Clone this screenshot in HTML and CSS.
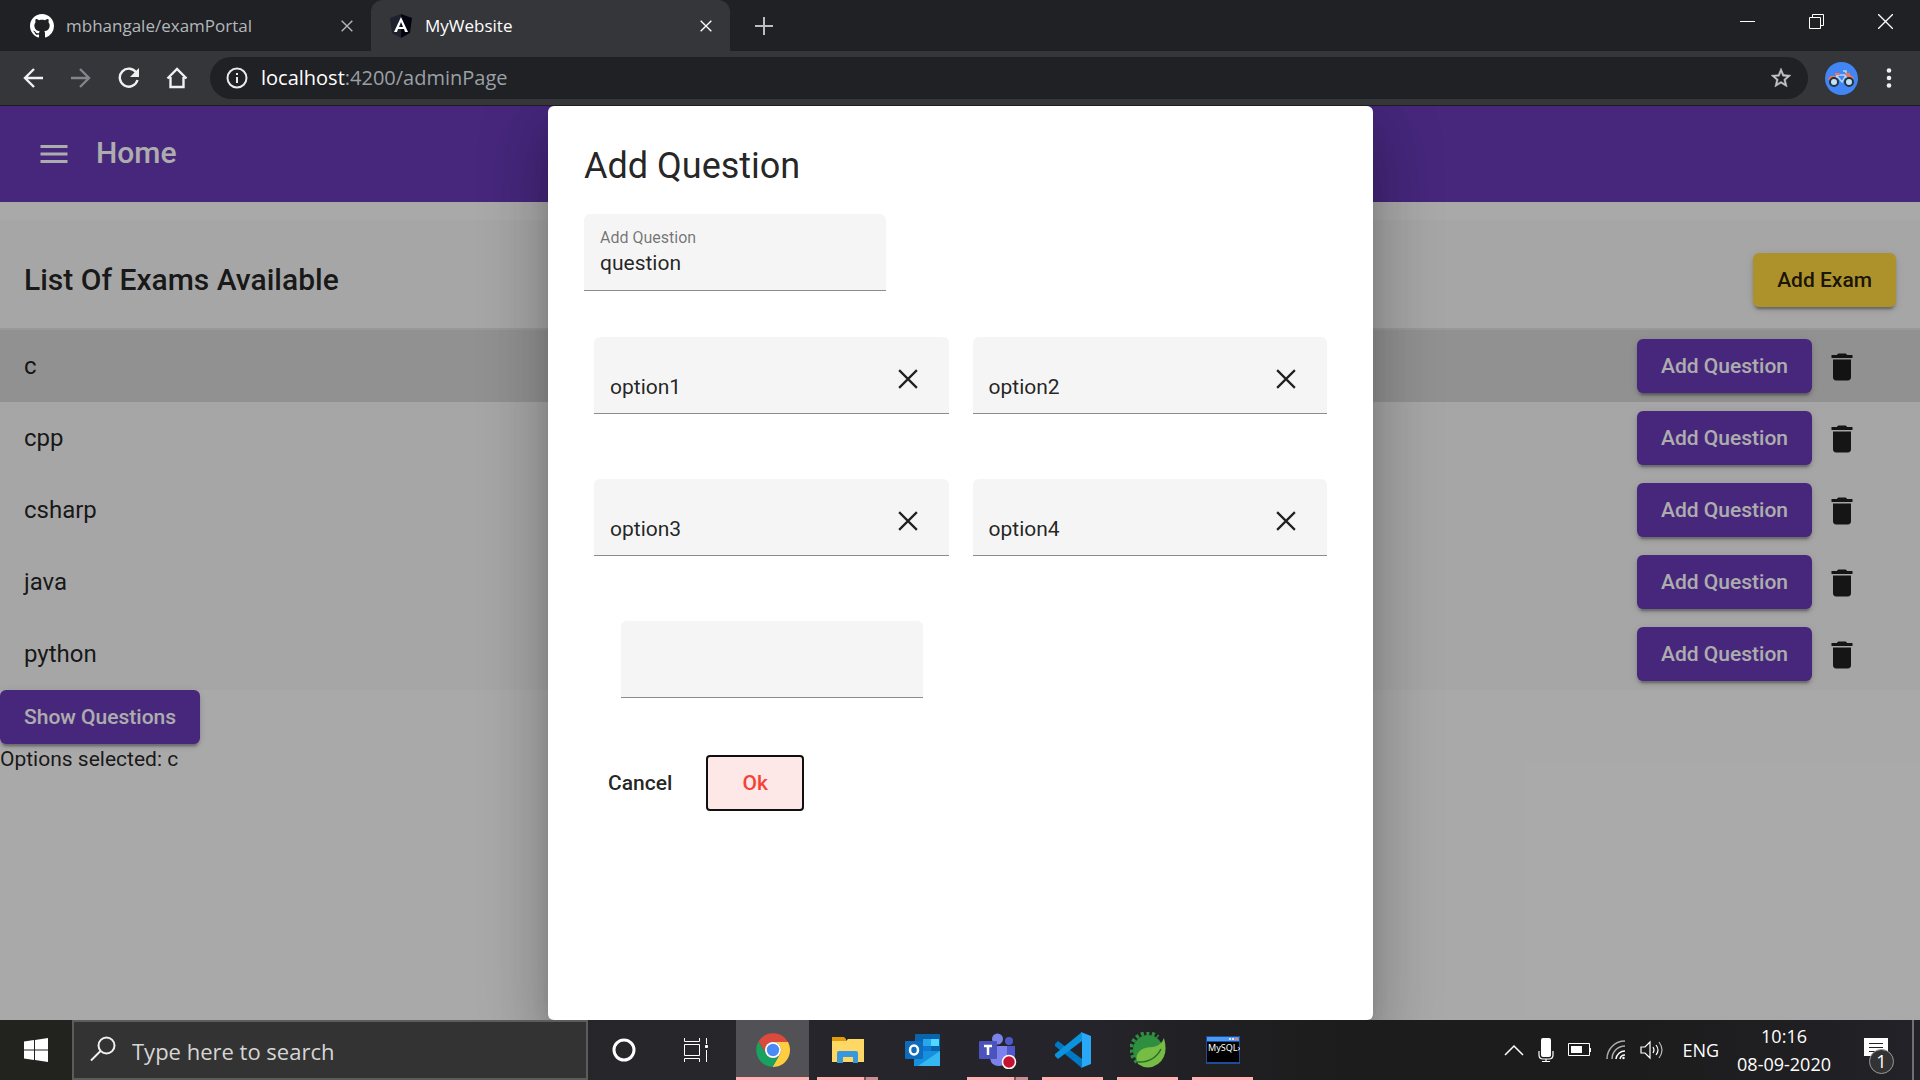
FILE: index.html
```html
<!DOCTYPE html>
<html lang="en">
<head>
<meta charset="utf-8">
<title>MyWebsite</title>
<link rel="stylesheet" href="styles.css">
</head>
<body>
<svg class="defs" aria-hidden="true">
  <symbol id="trash" viewBox="0 0 24 24"><path d="M6 19c0 1.100.9 2 2 2h8c1.100 0 2-.9 2-2V7H6v12zM19 4h-3.500l-1-1h-5l-1 1H5v2h14V4z"/></symbol>
  <symbol id="cross" viewBox="0 0 18 18"><path d="M1 1 17 17M17 1 1 17" fill="none" stroke="currentColor" stroke-width="2"/></symbol>
</svg>

<header class="browser">
  <div class="tabs">
    <div class="tab">
      <svg class="favicon" viewBox="0 0 16 16"><path fill="#fff" d="M8 0C3.580 0 0 3.580 0 8c0 3.540 2.290 6.530 5.470 7.590.4.070.550-.170.550-.380 0-.190-.010-.820-.010-1.490-2.010.370-2.530-.490-2.690-.940-.090-.230-.480-.940-.820-1.130-.280-.150-.680-.520-.010-.530.630-.010 1.080.580 1.230.820.720 1.210 1.870.870 2.330.660.070-.520.280-.870.510-1.070-1.780-.2-3.640-.890-3.640-3.950 0-.870.310-1.590.820-2.150-.080-.2-.360-1.020.080-2.120 0 0 .670-.210 2.200.820.640-.180 1.320-.270 2-.270s1.360.090 2 .270c1.530-1.040 2.200-.820 2.200-.820.440 1.100.160 1.920.080 2.120.510.560.820 1.270.820 2.150 0 3.070-1.870 3.750-3.650 3.950.290.250.540.730.540 1.480 0 1.070-.010 1.930-.010 2.200 0 .210.150.460.550.380A8.010 8.010 0 0 0 16 8c0-4.420-3.580-8-8-8z"/></svg>
      <span class="tab-title">mbhangale/examPortal</span>
      <button class="tab-close" aria-label="Close tab"><svg width="12" height="12"><use href="#cross"/></svg></button>
    </div>
    <div class="tab active">
      <svg class="favicon" viewBox="0 0 24 24"><path fill="#1d222e" d="M12 0 1 4l2 15 9 5z"/><path fill="#02050f" d="m12 0 11 4-2 15-9 5z"/><path fill="#fff" d="M12 3 5 18h3l1-3h6l1 3h3zm0 5 2 5h-4z"/></svg>
      <span class="tab-title">MyWebsite</span>
      <button class="tab-close" aria-label="Close tab"><svg width="12" height="12"><use href="#cross"/></svg></button>
    </div>
    <button class="new-tab" aria-label="New tab"><svg width="18" height="18" viewBox="0 0 18 18"><path d="M9 0v18M0 9h18" stroke="#bcbdbf" stroke-width="2"/></svg></button>
    <div class="window-controls">
      <button aria-label="Minimize"><svg width="15" height="15"><path d="M0 7.500h15" stroke="#fff"/></svg></button>
      <button aria-label="Restore"><svg width="15" height="15" fill="none" stroke="#fff"><path d="M.5 3.500h11v11H.5zM3.500 3.500v-3h11v11h-3"/></svg></button>
      <button aria-label="Close"><svg width="15" height="15"><path d="m0 0 15 15M15 0 0 15" stroke="#fff" stroke-width="1.300"/></svg></button>
    </div>
  </div>
  <nav class="toolbar">
    <button aria-label="Back"><svg width="20" height="20" viewBox="0 0 20 20"><path d="M20 10H2M11 1l-9 9 9 9"/></svg></button>
    <button class="dim" aria-label="Forward"><svg width="20" height="20" viewBox="0 0 20 20"><path d="M0 10h18M9 1l9 9-9 9"/></svg></button>
    <button aria-label="Reload"><svg width="22" height="22" viewBox="0 0 22 22"><path d="M18.500 6A9 9 0 1 0 19.500 13"/><path class="solid" d="M21 1v9h-9z"/></svg></button>
    <button aria-label="Home"><svg width="22" height="22" viewBox="0 0 22 22"><path d="M1.500 11.500 11 2l9.500 9.500M4.500 10v10h13V10"/></svg></button>
    <div class="address">
      <svg width="22" height="22" viewBox="0 0 22 22"><circle cx="11" cy="11" r="9.500" fill="none" stroke="#e8eaed" stroke-width="2"/><path d="M11 10v6M11 6v2" stroke="#e8eaed" stroke-width="2"/></svg>
      <div class="url" role="textbox" aria-label="Address">localhost<span>:4200/adminPage</span></div>
      <button class="star" aria-label="Bookmark"><svg width="24" height="24" viewBox="0 0 24 24"><path d="m22 9.240-7.190-.620L12 2 9.190 8.630 2 9.240l5.460 4.730L5.820 21 12 17.270 18.180 21l-1.630-7.030L22 9.240zM12 15.400l-3.760 2.270 1-4.280-3.320-2.880 4.380-.380L12 6.100l1.710 4.040 4.380.380-3.320 2.880 1 4.280L12 15.400z"/></svg></button>
    </div>
    <button class="profile" aria-label="Profile"><svg width="33" height="33" viewBox="0 0 33 33" fill="none"><circle cx="16.500" cy="16.500" r="16.500" fill="#4285f4"/><g class="frame"><path d="m9 20 3-7h8l4 7M12 14l5 6 4-7M18 9h3v4"/></g><g class="trim"><path d="M10 12h5M4 18q1-4 6-3M22 14q4-1 6 3M20 12h5"/></g><g fill="#c1e3fa" stroke="#26323e" stroke-width="2"><circle cx="9" cy="20" r="4"/><circle cx="24" cy="20" r="4"/></g></svg></button>
    <button class="kebab" aria-label="Menu"><svg width="6" height="20" viewBox="0 0 6 20" fill="#f1f1f1"><circle cx="3" cy="2.500" r="2.300"/><circle cx="3" cy="10" r="2.300"/><circle cx="3" cy="17.500" r="2.300"/></svg></button>
  </nav>
</header>

<main class="viewport">
  <div class="app">
    <header class="app-bar">
      <button aria-label="Open menu"><svg width="36" height="36" viewBox="0 0 24 24"><path fill="#fff" d="M3 18h18v-2H3v2zm0-5h18v-2H3v2zm0-7v2h18V6H3z"/></svg></button>
      <h1>Home</h1>
    </header>
    <section class="exams">
      <div class="exams-head">
        <h2>List Of Exams Available</h2>
        <button class="btn accent">Add Exam</button>
      </div>
      <ul>
        <li class="selected"><span>c</span><button class="btn primary">Add Question</button><button class="delete" aria-label="Delete c"><svg><use href="#trash"/></svg></button></li>
        <li><span>cpp</span><button class="btn primary">Add Question</button><button class="delete" aria-label="Delete cpp"><svg><use href="#trash"/></svg></button></li>
        <li><span>csharp</span><button class="btn primary">Add Question</button><button class="delete" aria-label="Delete csharp"><svg><use href="#trash"/></svg></button></li>
        <li><span>java</span><button class="btn primary">Add Question</button><button class="delete" aria-label="Delete java"><svg><use href="#trash"/></svg></button></li>
        <li><span>python</span><button class="btn primary">Add Question</button><button class="delete" aria-label="Delete python"><svg><use href="#trash"/></svg></button></li>
      </ul>
    </section>
    <button class="btn primary">Show Questions</button>
    <p class="summary">Options selected: c</p>
  </div>

  <div class="backdrop">
    <form class="dialog" role="dialog" aria-labelledby="dialog-title">
      <h2 id="dialog-title">Add Question</h2>
      <div class="field narrow">
        <div class="field-text">
          <label for="question">Add Question</label>
          <input id="question" type="text" value="question">
        </div>
      </div>
      <div class="options">
        <div class="field"><input type="text" value="option1" aria-label="Option 1"><button type="button" aria-label="Clear option 1"><svg width="20" height="20"><use href="#cross"/></svg></button></div>
        <div class="field"><input type="text" value="option2" aria-label="Option 2"><button type="button" aria-label="Clear option 2"><svg width="20" height="20"><use href="#cross"/></svg></button></div>
        <div class="field"><input type="text" value="option3" aria-label="Option 3"><button type="button" aria-label="Clear option 3"><svg width="20" height="20"><use href="#cross"/></svg></button></div>
        <div class="field"><input type="text" value="option4" aria-label="Option 4"><button type="button" aria-label="Clear option 4"><svg width="20" height="20"><use href="#cross"/></svg></button></div>
      </div>
      <div class="field narrow answer"><input type="text" aria-label="Answer"></div>
      <div class="actions">
        <button type="button" class="cancel">Cancel</button>
        <button type="button" class="ok">Ok</button>
      </div>
    </form>
  </div>
</main>

<footer class="taskbar">
  <button class="start" aria-label="Start"><svg width="24" height="24" viewBox="0 0 24 24" fill="#fff"><path d="M0 3.500 10 2v9.500H0zM11 2l13-2v11.500H11zM0 12.500h10V22L0 20.500zM11 12.500h13V24l-13-2z"/></svg></button>
  <label class="search">
    <svg width="26" height="26" viewBox="0 0 26 26" fill="none" stroke="#f0f0f0" stroke-width="2"><circle cx="16.500" cy="9.500" r="8"/><path d="M10.500 15 1 24.500"/></svg>
    <input type="text" placeholder="Type here to search" aria-label="Search">
  </label>
  <button class="shell" aria-label="Cortana"><svg width="24" height="24"><circle cx="12" cy="12" r="10" fill="none" stroke="#fff" stroke-width="3"/></svg></button>
  <button class="shell" aria-label="Task view"><svg width="26" height="24" viewBox="0 0 26 24" fill="none" stroke="#fff"><path d="M1.500 0v3.500h15V0M1.500 6.500h15v11h-15zM1.500 24v-3.500h15V24M23.500 0v6M23.500 12v12"/><path fill="#fff" d="M22.500 7.500h2v2h-2z"/></svg></button>
  <div class="apps">
    <button class="task current" aria-label="Chrome"><svg width="34" height="34" viewBox="0 0 34 34"><path fill="#db4a3c" d="M2.500 8.500A17 17 0 0 1 32 9H17a8 8 0 0 0-7.500 11z"/><path fill="#ffcd40" d="M32 9a17 17 0 0 1-15.500 25L24 21a8 8 0 0 0-7-12z"/><path fill="#18a15f" d="M2.500 8.500A17 17 0 0 0 16.500 34L24 21a8 8 0 0 1-14 0z"/><circle cx="17" cy="17" r="8" fill="#fff"/><circle cx="17" cy="17" r="6.200" fill="#4a8af4"/></svg></button>
    <button class="task open many" aria-label="File Explorer"><svg width="34" height="28" viewBox="0 0 34 28"><path fill="#e09c0b" d="M1 1h12l2 2h0v3H1z"/><path fill="#ffd765" d="M1 5h14l2-2h16v23H1z"/><path fill="#3898dd" d="M6 27V17q0-2 2-2h17q2 0 2 2v10h-5v-6H12v6z"/></svg></button>
    <button class="task" aria-label="Outlook"><svg width="36" height="34" viewBox="0 0 36 34"><rect x="10" y="1" width="25" height="20" rx="1" fill="#0a64ad"/><path fill="#28a8ea" d="M18 6h8v7h-8z"/><path fill="#50d9ff" d="M26 6h8v7h-8z"/><path fill="#0f78d4" d="M18 13h8v7h-8z"/><path fill="#1490df" d="m9 18 26 0v15H9z"/><path fill="#35b8f1" d="m35 18-22 15h22z"/><rect y="8" width="18" height="18" rx="1" fill="#0f6cbd"/><ellipse cx="9" cy="17" rx="4" ry="4.500" fill="none" stroke="#fff" stroke-width="2.500"/></svg></button>
    <button class="task open many" aria-label="Teams"><svg width="38" height="38" viewBox="0 0 38 38"><circle cx="30" cy="10" r="4" fill="#5059c9"/><circle cx="18.500" cy="8" r="5.500" fill="#7b83eb"/><path fill="#5059c9" d="M24 15h12v9q0 6-6 6h-6z"/><path fill="#7b83eb" d="M11 15h17v12q0 8-8 8t-9-8z"/><rect y="10" width="18" height="18" rx="1" fill="#4b53bc"/><path d="M5 15h8M9 15v9" stroke="#fff" stroke-width="2.500"/><circle cx="30" cy="31" r="6.500" fill="#c4122f" stroke="#fff" stroke-width="1.500"/></svg></button>
    <button class="task open" aria-label="Visual Studio Code"><svg width="36" height="36" viewBox="0 0 36 36"><path fill="#0079c4" d="m3 9-3 3v2l27 22v-9z"/><path fill="#0b93dd" d="M27 0 0 22v2l3 3 24-18z"/><path fill="#29a9f5" d="m26 0 10 4v28l-10 4q1-1 1-2V2z"/></svg></button>
    <button class="task open" aria-label="Spring Tools"><svg width="36" height="36" viewBox="0 0 36 36"><circle cx="18" cy="18" r="15" fill="#2f8f40"/><path fill="none" stroke="#2f8f40" stroke-width="4" stroke-dasharray="3 2.500" d="M7 30A16 16 0 0 1 28 5"/><path fill="#77bc43" d="M34 6q5 18-6 26-10 7-20 0-4-9 3-14 4-3 12-3 8-1 11-9z"/><path d="M7 30q17 1 24-13" fill="none" stroke="#246b32" stroke-width="1.500"/></svg></button>
    <button class="task open" aria-label="MySQL"><svg width="34" height="28" viewBox="0 0 34 28"><path fill="#204b9b" d="M0 0h34v28H0z"/><path fill="#4a9bf0" d="M1 1h32v4H1z"/><path fill="#e6876b" d="M29 2h3v2h-3z"/><path fill="#d4e6f8" d="M23 2h2v2h-2zM26 2h2v2h-2z"/><path fill="#000" d="M1 6h32v20H1z"/><text x="2" y="15" class="icon-text">MySQL›</text></svg></button>
  </div>
  <div class="tray">
    <div class="tray-icons">
      <button aria-label="Show hidden icons"><svg width="20" height="12"><path d="m1 11 9-9 9 9" fill="none" stroke="#fff" stroke-width="1.500"/></svg></button>
      <svg width="16" height="24" viewBox="0 0 16 24"><rect x="3" width="10" height="19" rx="2" fill="#fff"/><path d="M1 13v4q0 4 4 4h6q4 0 4-4v-4M8 21v3M4 23.500h8" fill="none" stroke="#fff" stroke-width="1.200"/></svg>
      <svg width="24" height="14" viewBox="0 0 24 14"><path d="M.5.500h21v12H.5zM22.500 5v4" fill="none" stroke="#fff"/><path fill="#fff" d="M3 3h11v7H3z"/></svg>
      <svg width="20" height="20" viewBox="0 0 20 20" fill="none" stroke="#aaa" stroke-width="1.500"><path d="M1 19A18 18 0 0 1 19 1M6 19A13 13 0 0 1 19 6"/><path stroke="#fff" d="M10 19a9 9 0 0 1 9-8M14 19a5 5 0 0 1 5-4"/><circle cx="17.500" cy="18" r="1.200" fill="#fff" stroke="none"/></svg>
      <svg width="24" height="20" viewBox="0 0 24 20" fill="none" stroke="#fff" stroke-width="1.200"><path d="M1 7v6h4l5 5V2L5 7zM13 7q2 3 0 6M16 5q4 5 0 10"/><path stroke="#bbb" d="M19 2q6 8 0 16"/></svg>
    </div>
    <span>ENG</span>
    <time class="clock" datetime="2020-09-08T10:16"><span>10:16</span><span>08-09-2020</span></time>
    <button class="notify" aria-label="Notifications"><svg width="24" height="24" viewBox="0 0 24 24"><path fill="#fff" d="M0 0h24v18H14l-3 5v-5H0z"/><path d="M5 5.500h14M5 9.500h14M5 13.500h8" stroke="#222"/></svg><span class="badge">1</span></button>
  </div>
  <button class="show-desktop" aria-label="Show desktop"></button>
</footer>
</body>
</html>
```
FILE: styles.css
```css
* { box-sizing: border-box; }
body { margin: 0; height: 100vh; display: flex; flex-direction: column; overflow: hidden; font-family: Roboto, sans-serif; color: rgba(0, 0, 0, .87); }
h1, h2, p, ul { margin: 0; padding: 0; list-style: none; }
button, input { font: inherit; color: inherit; background: none; border: 0; padding: 0; margin: 0; }
button { display: flex; align-items: center; justify-content: center; }
svg { display: block; flex: none; }
.defs { display: none; }

/* Browser window */
.browser { flex: none; background: #202124; color: #fff; font-family: "Open Sans", sans-serif; }
.tabs { display: flex; height: 51px; }
.tab { display: flex; align-items: center; gap: 12px; width: 359px; height: 51px; padding: 0 18px; color: #b4b8bc; }
.tab:first-child { width: 371px; padding: 0 18px 0 30px; }
.tab.active { background: #35363a; border-radius: 12px 12px 0 0; color: #fff; }
.favicon { width: 24px; height: 24px; }
.tab-title { flex: 1; font-size: 17px; line-height: 24px; }
.tab-close { width: 12px; }
.new-tab { width: 68px; }
.window-controls { display: flex; margin-left: auto; height: 43px; }
.window-controls button { width: 69px; }
.toolbar { display: flex; align-items: center; height: 55px; padding-left: 9px; background: #35363a; border-bottom: 1px solid #1d1d20; }
.toolbar button { width: 48px; height: 42px; }
.toolbar button svg path { fill: none; stroke: #f1f1f1; stroke-width: 2.4; }
.toolbar button svg .solid { fill: #f1f1f1; stroke: none; }
.toolbar .dim svg path { stroke: #84858a; }
.toolbar .star svg path { fill: #c4c5c7; stroke: #c4c5c7; stroke-width: .4; }
.toolbar .profile { width: 33px; margin-left: 17px; }
.toolbar .profile .frame path { stroke-width: 1.5; stroke: #b5d6f5; }
.toolbar .profile .trim path { stroke-width: 2; stroke: #f3754f; }
.toolbar .kebab { width: 62px; }
.address { flex: 1; display: flex; align-items: center; gap: 13px; height: 42px; margin-left: 9px; padding: 0 3px 0 16px; border-radius: 21px; background: #202124; }
.url { flex: 1; font-size: 20px; line-height: 28px; }
.url span { color: #9aa0a6; }

/* Admin page */
.viewport { flex: 1; min-height: 0; position: relative; background: #fafafa; font-size: 21px; }
.app-bar { display: flex; align-items: center; height: 96px; padding: 0 24px; background: #673ab7; color: #fff; }
.app-bar button { width: 60px; height: 60px; }
.app-bar h1 { margin-left: 12px; font-size: 30px; font-weight: 500; line-height: 36px; padding-bottom: 2px; }
.exams { margin-top: 18px; background: #f5f5f5; }
.exams-head { display: flex; align-items: center; justify-content: space-between; height: 110px; padding: 12px 24px 0; border-bottom: 2px solid #e0e0e0; }
.exams-head h2 { font-size: 30px; font-weight: 500; line-height: 36px; }
.exams li { display: flex; align-items: center; height: 72px; padding: 0 60px 0 24px; font-size: 24px; }
.exams li span { flex: 1; }
.selected { background: #d6d6d6; }
.delete { margin-left: 12px; padding-top: 2px; }
.delete svg { width: 36px; height: 36px; fill: currentColor; }
.btn { height: 54px; padding: 0 24px; border-radius: 6px; font-size: 21px; font-weight: 500; box-shadow: 0 5px 2px -3px rgba(0, 0, 0, .2), 0 3px 3px rgba(0, 0, 0, .14), 0 2px 8px rgba(0, 0, 0, .12); }
.primary { background: #673ab7; color: #fff; }
.accent { background: #ffd740; }
.summary { line-height: 30px; }

/* Add question dialog */
.backdrop { position: absolute; inset: 0; display: flex; justify-content: center; padding-left: 1px; background: rgba(0, 0, 0, .32); overflow: hidden; }
.dialog { width: 43%; max-width: 825px; padding: 36px; border-radius: 6px; background: #fff; box-shadow: 0 16px 22px -10px rgba(0, 0, 0, .2), 0 36px 57px 4px rgba(0, 0, 0, .14), 0 14px 69px 12px rgba(0, 0, 0, .12); }
.dialog h2 { margin-bottom: 24px; font-size: 36px; font-weight: 400; line-height: 48px; }
.field { display: flex; align-items: center; height: 77px; padding: 0 16px; background: #f5f5f5; border-bottom: 1px solid #8c8c8c; border-radius: 6px 6px 0 0; }
.field input { flex: 1; width: 100%; min-width: 0; height: 28px; outline: 0; }
.field label { display: block; font-size: 16px; line-height: 22px; color: rgba(0, 0, 0, .54); }
.field button { width: 50px; height: 60px; padding-top: 8px; }
.narrow { width: 302px; }
.options { display: grid; grid-template-columns: 1fr 1fr; gap: 65px 24px; margin: 46px 10px 65px; }
.options input { margin-top: 24px; }
.answer { margin-left: 37px; }
.actions { display: flex; gap: 10px; margin-top: 57px; }
.actions button { height: 56px; font-weight: 500; border-radius: 4px; }
.cancel { padding: 0 24px; }
.ok { width: 98px; border: 2px solid #101010; background: #fee8e7; color: #f44336; }

/* Windows taskbar */
.taskbar { flex: none; display: flex; height: 60px; color: #fff; font-family: "Open Sans", sans-serif; background: linear-gradient(90deg, #22221e, #26262b 32%, #24242a 57%, #1c1c1c 70%, #1c1c1c 85%, #222228); }
.start, .shell { width: 72px; }
.search { display: flex; align-items: center; gap: 16px; width: 516px; padding: 0 16px; background: #333; border: 2px solid #5c5c5c; }
.search svg { margin-top: -2px; }
.search input { flex: 1; padding-top: 2px; font-size: 22px; }
.search input::placeholder { color: #d6d6d6; opacity: 1; }
.apps { display: flex; gap: 2px; margin-left: 4px; }
.task { width: 73px; padding-bottom: 1px; }
.current { background: linear-gradient(#ffb0b0, #ffb0b0) bottom / 100% 3px no-repeat #525256; }
.open { background: linear-gradient(#ffb0b0, #ffb0b0) bottom / 61px 3px no-repeat; }
.many { background-image: linear-gradient(90deg, #ffb0b0 47px, #77595c 47px, #77595c 49px, #c98e92 49px); }
.icon-text { font: 9px "Noto Sans", sans-serif; fill: #fff; }
.tray { display: flex; align-items: center; gap: 18px; margin-left: auto; font-size: 18px; }
.tray-icons { display: flex; align-items: center; gap: 14px; }
.clock { display: flex; flex-direction: column; align-items: center; line-height: 28px; }
.notify { position: relative; width: 54px; height: 60px; margin-right: 9px; }
.badge { position: absolute; left: 20px; top: 29px; width: 25px; height: 25px; border: 1px solid #999; border-radius: 50%; background: #333; line-height: 23px; text-align: center; }
.show-desktop { width: 8px; border-left: 2px solid #707070; }
```
